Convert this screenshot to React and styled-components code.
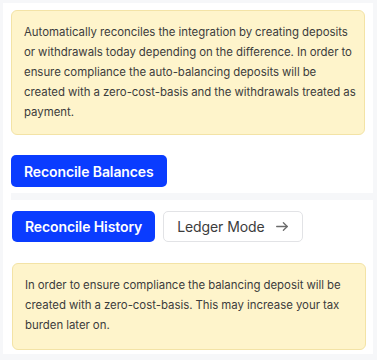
import React from 'react'
import styled, { createGlobalStyle } from 'styled-components'

const GlobalStyle = createGlobalStyle`
    * { box-sizing: border-box; }
    body {
        margin: 0;
        background: #f6f7f9;
        font-family: Inter, "Noto Sans", sans-serif;
    }
`

const Page = styled.div`
    padding: 3px 4px 7px 3px;
`

const Panel = styled.div`
    background: #ffffff;
    padding: 7px 0 4px 8px;
`

const Section = styled.div`
    display: flex;
    flex-direction: column;
    align-items: flex-start;
    padding-left: ${p => p.$shift || 0}px;
    padding-right: ${p => 8 - (p.$shift || 0)}px;
`

const Notice = styled.div`
    align-self: stretch;
    background: #fef4cb;
    border: 1px solid #f3e3a6;
    border-radius: 6px;
    padding: 11px 7px ${p => p.$pb || 12}px 12px;
    font-size: 11.4px;
    word-spacing: -0.2px;
    line-height: 20px;
    color: #3c3c3c;
    margin-top: ${p => p.$top || 0}px;
`

const PrimaryButton = styled.button`
    font-family: inherit;
    height: ${p => p.$h || 32}px;
    padding: 0 13px;
    background: #0a3cff;
    color: #ffffff;
    border: none;
    border-radius: 5px;
    font-size: 14px;
    font-weight: 600;
    letter-spacing: -0.1px;
    cursor: pointer;
    margin-top: ${p => p.$top || 0}px;
`

const Divider = styled.div`
    height: 7px;
    background: #f6f7f9;
    margin: 6px 0 11px;
`

const ButtonRow = styled.div`
    display: flex;
    gap: 8px;
`

const GhostButton = styled.button`
    font-family: inherit;
    height: 31px;
    display: flex;
    align-items: center;
    gap: 11px;
    padding: 0 14px 0 13px;
    background: #ffffff;
    border: 1px solid #e2e3e6;
    border-radius: 5px;
    color: #3c3c3c;
    font-size: 14px;
    letter-spacing: -0.1px;
    cursor: pointer;
`

function Arrow() {
    return (
        <svg width="12" height="9" viewBox="0 0 12 9" fill="none" stroke="#6b6b6b" strokeWidth="1.3" strokeLinecap="round" strokeLinejoin="round">
            <path d="M0.7 4.5 H11.2" />
            <path d="M7.4 0.8 L11.2 4.5 L7.4 8.2" />
        </svg>
    )
}

export default function App() {
    return (
        <>
            <GlobalStyle />
            <Page>
                <Panel>
                    <Section>
                        <Notice>
                            Automatically reconciles the integration by creating deposits or withdrawals today depending on the difference. In order to ensure compliance the auto-balancing deposits will be created with a zero-cost-basis and the withdrawals treated as payment.
                        </Notice>
                        <PrimaryButton $top={20}>Reconcile Balances</PrimaryButton>
                    </Section>
                    <Divider />
                    <Section $shift={1}>
                        <ButtonRow>
                            <PrimaryButton $h={31}>Reconcile History</PrimaryButton>
                            <GhostButton>
                                Ledger Mode
                                <Arrow />
                            </GhostButton>
                        </ButtonRow>
                        <Notice $top={21} $pb={14}>
                            In order to ensure compliance the balancing deposit will be created with a zero-cost-basis. This may increase your tax burden later on.
                        </Notice>
                    </Section>
                </Panel>
            </Page>
        </>
    )
}
